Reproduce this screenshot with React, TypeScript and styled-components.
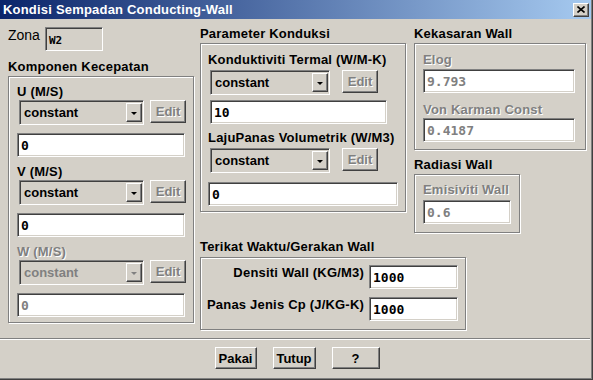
import React from "react";
import styled, { createGlobalStyle, css } from "styled-components";

const FACE = "#d4d0c8";
const SHADOW = "#808080";
const DARK = "#404040";
const HILITE = "#ffffff";

const GlobalStyle = createGlobalStyle`
  html, body { margin: 0; padding: 0; background: ${FACE}; }
  body { font-family: "Liberation Sans", Arial, sans-serif; }
  * { box-sizing: border-box; }
`;

const raised = css`
  background: ${FACE};
  border: 1px solid;
  border-color: ${HILITE} ${DARK} ${DARK} ${HILITE};
  box-shadow: inset -1px -1px 0 ${SHADOW};
`;

const sunken = css`
  border: 1px solid;
  border-color: ${SHADOW} ${HILITE} ${HILITE} ${SHADOW};
  box-shadow: inset 1px 1px 0 ${DARK}, inset -1px -1px 0 ${FACE};
`;

const etched = css`
  border: 1px solid ${SHADOW};
  box-shadow: inset 1px 1px 0 ${HILITE}, 1px 1px 0 ${HILITE};
`;

const dimText = css`
  color: ${SHADOW};
  text-shadow: 1px 1px 0 ${HILITE};
`;

const Window = styled.div`
  width: 593px;
  height: 380px;
  background: ${FACE};
  border-right: 1px solid ${DARK};
  border-bottom: 1px solid ${DARK};
  box-shadow: inset -1px -1px 0 ${SHADOW};
  display: flex;
  flex-direction: column;
  overflow: hidden;
`;

const TitleBar = styled.div`
  height: 19px;
  margin-right: 1px;
  background: linear-gradient(to right, #0a246a, #a6caf0);
  display: flex;
  align-items: center;
  justify-content: space-between;
  padding: 0 2px 0 3px;
`;

const TitleText = styled.span`
  color: #fff;
  font-weight: bold;
  font-size: 13px;
  letter-spacing: 0.2px;
  line-height: 15px;
`;

const CloseButton = styled.div`
  ${raised};
  width: 16px;
  height: 14px;
  display: flex;
  align-items: center;
  justify-content: center;
`;

const Body = styled.div`
  height: 319px;
  display: flex;
  align-items: flex-start;
`;

const LeftColumn = styled.div`
  width: 186px;
  margin-left: 8px;
  padding-top: 8px;
  display: flex;
  flex-direction: column;
`;

const RightArea = styled.div`
  margin-left: 6px;
  display: flex;
  flex-direction: column;
`;

const TopRow = styled.div`
  display: flex;
  align-items: flex-start;
  gap: 8px;
`;

const Column = styled.div<{ $w: number }>`
  width: ${(p) => p.$w}px;
  display: flex;
  flex-direction: column;
`;

const ZonaRow = styled.div`
  display: flex;
  align-items: flex-start;
  height: 25px;
`;

const ZonaLabel = styled.span`
  width: 37px;
  font-size: 14px;
  line-height: 16px;
  color: #000;
`;

const SectionTitle = styled.div<{ $mt?: number; $mb?: number }>`
  font-size: 13px;
  font-weight: bold;
  letter-spacing: 0.2px;
  line-height: 15px;
  height: 15px;
  color: #000;
  margin-top: ${(p) => p.$mt ?? 0}px;
  margin-bottom: ${(p) => p.$mb ?? 2}px;
  white-space: nowrap;
`;

const Group = styled.div<{ $w: number; $pt: number; $pb: number; $pl?: number; $pr?: number }>`
  ${etched};
  width: ${(p) => p.$w}px;
  padding: ${(p) => `${p.$pt}px ${p.$pr ?? 0}px ${p.$pb}px ${p.$pl ?? 0}px`};
  display: flex;
  flex-direction: column;
  align-items: flex-start;
`;

const FieldLabel = styled.div<{ $mt?: number; $dim?: boolean }>`
  font-size: 13px;
  font-weight: bold;
  letter-spacing: 0.2px;
  line-height: 15px;
  height: 15px;
  white-space: nowrap;
  color: #000;
  margin-top: ${(p) => p.$mt ?? 0}px;
  ${(p) => p.$dim && dimText};
`;

const ComboRow = styled.div<{ $mt: number; $ml: number; $gap: number }>`
  display: flex;
  align-items: flex-start;
  gap: ${(p) => p.$gap}px;
  margin-top: ${(p) => p.$mt}px;
  margin-left: ${(p) => p.$ml}px;
`;

const ComboBox = styled.div<{ $w: number }>`
  ${sunken};
  width: ${(p) => p.$w}px;
  height: 25px;
  background: ${FACE};
  display: flex;
  align-items: center;
  justify-content: space-between;
  padding: 0 1px 0 4px;
`;

const ComboText = styled.span<{ $dim?: boolean }>`
  font-size: 13px;
  font-weight: bold;
  line-height: 15px;
  color: #000;
  ${(p) => p.$dim && css`color: ${SHADOW};`};
`;

const DropButton = styled.div`
  ${raised};
  width: 16px;
  height: 19px;
  display: flex;
  align-items: center;
  justify-content: center;
`;

const Arrow = styled.span<{ $dim?: boolean }>`
  width: 0;
  height: 0;
  margin-top: 2px;
  border-left: 3px solid transparent;
  border-right: 3px solid transparent;
  border-top: 3px solid ${(p) => (p.$dim ? SHADOW : "#000")};
`;

const EditButton = styled.div<{ $w: number }>`
  ${raised};
  width: ${(p) => p.$w}px;
  height: 23px;
  display: flex;
  align-items: center;
  justify-content: center;
  font-size: 13px;
  font-weight: bold;
  line-height: 15px;
  ${dimText};
`;

const TextField = styled.div<{ $w: number; $mt?: number; $ml?: number; $dim?: boolean; $face?: boolean }>`
  ${sunken};
  width: ${(p) => p.$w}px;
  height: 24px;
  margin-top: ${(p) => p.$mt ?? 0}px;
  margin-left: ${(p) => p.$ml ?? 0}px;
  background: ${(p) => (p.$face ? FACE : "#fff")};
  display: flex;
  align-items: center;
  padding: 1px 0 0 3px;
  font-family: "DejaVu Sans Mono", "Liberation Mono", monospace;
  font-weight: bold;
  font-size: 13px;
  line-height: 15px;
  color: ${(p) => (p.$dim ? SHADOW : "#000")};
`;

const SmallValue = styled.span`
  font-size: 11px;
  margin-top: 2px;
`;

const FormRow = styled.div<{ $mt?: number }>`
  align-self: stretch;
  display: flex;
  justify-content: flex-end;
  align-items: flex-start;
  gap: 5px;
  margin-top: ${(p) => p.$mt ?? 0}px;
`;

const RowLabel = styled.span`
  font-size: 13px;
  font-weight: bold;
  letter-spacing: 0.2px;
  line-height: 15px;
  color: #000;
  white-space: nowrap;
`;

const Separator = styled.div`
  width: 590px;
  height: 2px;
  border-top: 1px solid ${SHADOW};
  border-bottom: 1px solid ${HILITE};
`;

const ButtonRow = styled.div`
  display: flex;
  justify-content: center;
  padding-top: 7px;
  padding-left: 2px;
  gap: 16px;
`;

const PushButton = styled.div<{ $w: number }>`
  ${raised};
  width: ${(p) => p.$w}px;
  height: 22px;
  display: flex;
  align-items: center;
  justify-content: center;
  font-size: 13px;
  font-weight: bold;
  line-height: 15px;
  color: #000;
`;

function Combo({ width, dim }: { width: number; dim?: boolean }) {
  return (
    <ComboBox $w={width}>
      <ComboText $dim={dim}>constant</ComboText>
      <DropButton>
        <Arrow $dim={dim} />
      </DropButton>
    </ComboBox>
  );
}

export default function App() {
  return (
    <>
      <GlobalStyle />
      <Window>
        <TitleBar>
          <TitleText>Kondisi Sempadan Conducting-Wall</TitleText>
          <CloseButton>
            <svg width="8" height="7" viewBox="0 0 8 7">
              <path d="M0.5 0.5 L7.5 6.5 M7.5 0.5 L0.5 6.5" stroke="#000" strokeWidth="1.6" fill="none" />
            </svg>
          </CloseButton>
        </TitleBar>
        <Body>
          <LeftColumn>
            <ZonaRow>
              <ZonaLabel>Zona</ZonaLabel>
              <TextField $w={58} $face>
                <SmallValue>W2</SmallValue>
              </TextField>
            </ZonaRow>
            <SectionTitle $mt={7}>Komponen Kecepatan</SectionTitle>
            <Group $w={186} $pt={7} $pl={8} $pb={5}>
              <FieldLabel>U (M/S)</FieldLabel>
              <ComboRow $mt={1} $ml={2} $gap={6}>
                <Combo width={125} />
                <EditButton $w={36}>Edit</EditButton>
              </ComboRow>
              <TextField $w={168} $mt={8}>0</TextField>

              <FieldLabel $mt={7}>V (M/S)</FieldLabel>
              <ComboRow $mt={1} $ml={2} $gap={6}>
                <Combo width={125} />
                <EditButton $w={36}>Edit</EditButton>
              </ComboRow>
              <TextField $w={168} $mt={8}>0</TextField>

              <FieldLabel $mt={7} $dim>W (M/S)</FieldLabel>
              <ComboRow $mt={1} $ml={2} $gap={6}>
                <Combo width={125} dim />
                <EditButton $w={36}>Edit</EditButton>
              </ComboRow>
              <TextField $w={168} $mt={8} $dim>0</TextField>
            </Group>
          </LeftColumn>

          <RightArea>
            <TopRow>
              <Column $w={206}>
                <SectionTitle $mt={7}>Parameter Konduksi</SectionTitle>
                <Group $w={206} $pt={8} $pl={7} $pb={5}>
                  <FieldLabel>Konduktiviti Termal (W/M-K)</FieldLabel>
                  <ComboRow $mt={3} $ml={2} $gap={12}>
                    <Combo width={120} />
                    <EditButton $w={36}>Edit</EditButton>
                  </ComboRow>
                  <TextField $w={177} $mt={5} $ml={2}>10</TextField>

                  <FieldLabel $mt={6}>LajuPanas Volumetrik (W/M3)</FieldLabel>
                  <ComboRow $mt={3} $ml={2} $gap={12}>
                    <Combo width={120} />
                    <EditButton $w={36}>Edit</EditButton>
                  </ComboRow>
                  <TextField $w={190} $mt={9}>0</TextField>
                </Group>
              </Column>

              <Column $w={172}>
                <SectionTitle $mt={7}>Kekasaran Wall</SectionTitle>
                <Group $w={172} $pt={8} $pl={8} $pb={7}>
                  <FieldLabel $dim>Elog</FieldLabel>
                  <TextField $w={152} $mt={2} $dim>9.793</TextField>
                  <FieldLabel $mt={9} $dim>Von Karman Const</FieldLabel>
                  <TextField $w={152} $mt={1} $dim>0.4187</TextField>
                </Group>
                <SectionTitle $mt={7}>Radiasi Wall</SectionTitle>
                <Group $w={106} $pt={7} $pl={8} $pb={8}>
                  <FieldLabel $dim>Emisiviti Wall</FieldLabel>
                  <TextField $w={88} $mt={3} $dim>0.6</TextField>
                </Group>
              </Column>
            </TopRow>

            <SectionTitle $mt={6} $mb={3}>Terikat Waktu/Gerakan Wall</SectionTitle>
            <Group $w={266} $pt={7} $pr={7} $pb={8}>
              <FormRow>
                <RowLabel>Densiti Wall (KG/M3)</RowLabel>
                <TextField $w={89}>1000</TextField>
              </FormRow>
              <FormRow $mt={8}>
                <RowLabel>Panas Jenis Cp (J/KG-K)</RowLabel>
                <TextField $w={89}>1000</TextField>
              </FormRow>
            </Group>
          </RightArea>
        </Body>
        <Separator />
        <ButtonRow>
          <PushButton $w={42}>Pakai</PushButton>
          <PushButton $w={43}>Tutup</PushButton>
          <PushButton $w={48}>?</PushButton>
        </ButtonRow>
      </Window>
    </>
  );
}
